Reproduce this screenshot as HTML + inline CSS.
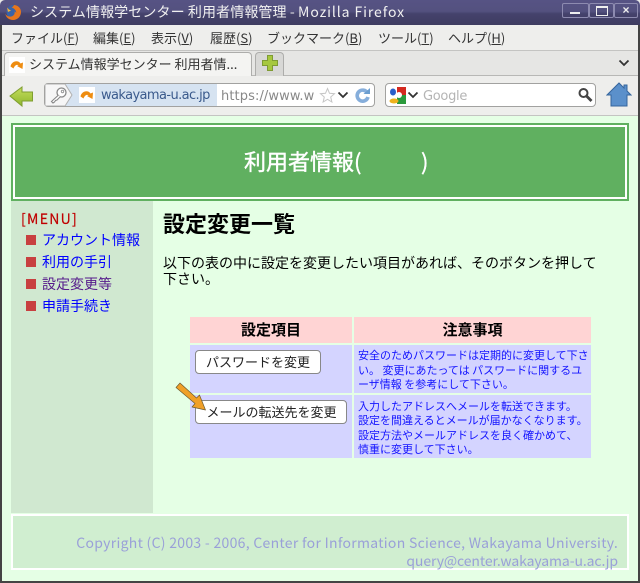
<!DOCTYPE html>
<html lang="ja"><head><meta charset="utf-8"><title>システム情報学センター 利用者情報管理</title>
<style>
html,body{margin:0;padding:0}
body{width:640px;height:583px;position:relative;overflow:hidden;background:#e9e9e7;font-family:"Liberation Sans","WenQuanYi Zen Hei","Noto Sans CJK JP",sans-serif;color:#222}
.a{position:absolute;white-space:nowrap}
.j{font-family:"WenQuanYi Zen Hei","Noto Sans CJK JP",sans-serif}
u{text-decoration:underline}
</style></head><body>
<div class="a" style="left:0;top:0;width:640px;height:25px;background:linear-gradient(#565384 0,#54517f 45%,#45426c 55%,#3e3c60 100%);border-radius:5px 5px 0 0"></div>
<svg class="a" style="left:4px;top:3px" width="18" height="18" viewBox="0 0 18 18"><circle cx="9.500" cy="9" r="7" fill="#3a63a8"/><path d="M10 2c4 .2 7 3 7 7 0 4.500-3.500 8-8 8-4 0-7-2.500-7.800-6.500 1.200 2.300 3.500 3.500 6 3 2.800-.6 4-3 3.300-5 .9.300 1.400.9 1.800 1.500-.2-2.800-2.300-5-4.800-5.500C8.800 3.800 9.600 3 10 2z" fill="#e8761c"/><path d="M3 4.500l1 4.500 3-1.500-2-1z" fill="#f4b23a"/></svg>
<div class="a j" style="left:30px;top:4px;font-size:14px;line-height:17px;color:#f0f0f0;letter-spacing:.1px">システム情報学センター 利用者情報管理 - <span style="letter-spacing:.9px">Mozilla Firefox</span></div>
<div class="a" style="left:562px;top:3px;width:25px;height:13px;border:1px solid #8d8bb0;border-radius:2px"><div class="a" style="left:7px;top:8px;width:10px;height:2px;background:#eee"></div></div>
<div class="a" style="left:589px;top:3px;width:23px;height:13px;border:1px solid #8d8bb0;border-radius:2px"><div class="a" style="left:6px;top:2px;width:10px;height:7px;border:1px solid #eee;border-top-width:2px"></div></div>
<div class="a" style="left:614px;top:3px;width:22px;height:13px;border:1px solid #8d8bb0;border-radius:2px;color:#eee;font:bold 12px/13px 'Liberation Sans',sans-serif;text-align:center">×</div>
<div class="a j" style="left:0;top:25px;width:640px;height:26px;background:#eeeeec;border-bottom:1px solid #c4c4c2;box-sizing:border-box"></div>
<div class="a j" style="left:11px;top:30px;font-size:13px;line-height:16px;color:#333">ファイル(<u>F</u>)</div>
<div class="a j" style="left:93px;top:30px;font-size:13px;line-height:16px;color:#333">編集(<u>E</u>)</div>
<div class="a j" style="left:151px;top:30px;font-size:13px;line-height:16px;color:#333">表示(<u>V</u>)</div>
<div class="a j" style="left:210px;top:30px;font-size:13px;line-height:16px;color:#333">履歴(<u>S</u>)</div>
<div class="a j" style="left:267px;top:30px;font-size:13px;line-height:16px;color:#333">ブックマーク(<u>B</u>)</div>
<div class="a j" style="left:378px;top:30px;font-size:13px;line-height:16px;color:#333">ツール(<u>T</u>)</div>
<div class="a j" style="left:448px;top:30px;font-size:13px;line-height:16px;color:#333">ヘルプ(<u>H</u>)</div>
<div class="a" style="left:0;top:51px;width:640px;height:25px;background:#e6e6e4;border-bottom:1px solid #b8b8b6;box-sizing:border-box"></div>
<div class="a" style="left:4px;top:52px;width:248px;height:24px;background:#f4f4f2;border:1px solid #adadab;border-bottom:0;border-radius:4px 4px 0 0;box-sizing:border-box"></div>
<svg class="a" style="left:9px;top:57px" width="16" height="16"><rect width="16" height="16" fill="#fff"/><path d="M1.500 9.500C2.500 4 9 2.500 11.500 6.500l2.500-1-.5 6.500-5.500-3 1.500-.8C8 7.500 6 8 4.500 11.500z" fill="#ee8c10"/></svg>
<div class="a j" style="left:29px;top:56px;font-size:13px;line-height:16px;color:#333">システム情報学センター 利用者情...</div>
<div class="a" style="left:255px;top:52px;width:29px;height:24px;background:#d8d8d6;border:1px solid #adadab;border-bottom:0;border-radius:4px 4px 0 0;box-sizing:border-box"></div>
<svg class="a" style="left:261px;top:54px" width="18" height="18"><path d="M6.500 1.500h5v5h5v5h-5v5h-5v-5h-5v-5h5z" fill="#a6c83e" stroke="#7f9c33"/></svg>
<svg class="a" style="left:618px;top:59px" width="12" height="8"><path d="M1.500 1.500L6 6l4.500-4.500" fill="none" stroke="#333" stroke-width="1.800"/></svg>
<div class="a" style="left:0;top:76px;width:640px;height:39px;background:#eeeeec"></div>
<svg class="a" style="left:9px;top:85px" width="25" height="23"><defs><linearGradient id="g" x1="0" y1="0" x2="0" y2="1"><stop offset="0" stop-color="#c4dc5c"/><stop offset="1" stop-color="#8fb82e"/></linearGradient></defs><path d="M1 11L13 2v5h10.500v9H13v5z" fill="url(#g)" stroke="#7f9e30"/></svg>
<div class="a" style="left:44px;top:83px;width:331px;height:24px;background:#fff;border:1px solid #a2a2a0;border-radius:4px;box-sizing:border-box"></div>
<div class="a" style="left:66px;top:84px;width:151px;height:22px;background:#d6e3f1"></div>
<svg class="a" style="left:45px;top:84px" width="29" height="22"><path d="M0 0h20l7 11-7 11H0z" fill="#f6f6f6" stroke="#b0b0b0"/></svg>
<svg class="a" style="left:49px;top:86px" width="19" height="18"><circle cx="12.500" cy="6.500" r="4.500" fill="#fff" stroke="#888" stroke-width="1.300"/><circle cx="13.500" cy="5.500" r="1.200" fill="none" stroke="#999"/><path d="M9 9.500L2.500 15.500l1.500 1.500 1.500-1 1-1.500 1.500-.5 3.500-3.500" fill="#fff" stroke="#888" stroke-width="1.100"/></svg>
<svg class="a" style="left:79px;top:87px" width="16" height="16"><rect width="16" height="16" fill="#fff"/><path d="M1.500 9.500C2.500 4 9 2.500 11.500 6.500l2.500-1-.5 6.500-5.500-3 1.500-.8C8 7.500 6 8 4.500 11.500z" fill="#ee8c10"/></svg>
<div class="a" style="left:101px;top:87px;font:13px/17px 'DejaVu Sans',sans-serif;color:#3a5a8c;letter-spacing:-.6px">wakayama-u.ac.jp</div>
<div class="a" style="left:221px;top:88px;width:93px;overflow:hidden;font:13px/17px 'DejaVu Sans',sans-serif;color:#888;letter-spacing:.1px">https://www.w</div>
<svg class="a" style="left:319px;top:87px" width="17" height="16"><path d="M8.500 1.500l2 4.800 5 .4-3.800 3.300 1.200 5-4.400-2.700-4.400 2.700 1.200-5L1.500 6.700l5-.4z" fill="#fff" stroke="#c6c6c6"/></svg>
<svg class="a" style="left:337px;top:91px" width="12" height="8"><path d="M1.500 1.500L6 6l4.500-4.500" fill="none" stroke="#333" stroke-width="1.800"/></svg>
<svg class="a" style="left:354px;top:87px" width="17" height="16"><path d="M13.500 6a5.500 5.500 0 1 0 .5 4" fill="none" stroke="#86aedb" stroke-width="3.600"/><path d="M9.500 7h6.500V1z" fill="#6d9fd0"/></svg>
<div class="a" style="left:385px;top:83px;width:211px;height:24px;background:#fff;border:1px solid #a2a2a0;border-radius:4px;box-sizing:border-box"></div>
<svg class="a" style="left:389px;top:87px" width="17" height="17"><rect x="8" width="9" height="8" fill="#d42a20"/><rect x="8" y="8" width="9" height="9" fill="#2b9a3c"/><ellipse cx="4" cy="5" rx="3" ry="3.500" fill="#2a5dc8"/><ellipse cx="5" cy="14" rx="4.500" ry="2.500" fill="#eeb21c"/><circle cx="10" cy="8" r="3" fill="#fff"/></svg>
<svg class="a" style="left:407px;top:91px" width="12" height="8"><path d="M1.500 1.500L6 6l4.500-4.500" fill="none" stroke="#333" stroke-width="1.800"/></svg>
<div class="a" style="left:423px;top:88px;font:13px/17px 'DejaVu Sans',sans-serif;color:#b4b4b4;letter-spacing:-.3px">Google</div>
<svg class="a" style="left:577px;top:87px" width="17" height="16"><circle cx="6.500" cy="6" r="4" fill="none" stroke="#444" stroke-width="2"/><path d="M9.500 9l5 5" stroke="#444" stroke-width="2.800"/></svg>
<svg class="a" style="left:606px;top:82px" width="26" height="25"><path d="M13 1L1 13h4v11h16V13h4l-4-4V3h-3v3z" fill="#5b90cb" stroke="#35659d"/></svg>
<div class="a" style="left:2px;top:115px;width:636px;height:466px;background:#e5ffe5;border-top:1px solid #c4c4c2;box-sizing:border-box"></div>
<div class="a" style="left:0;top:25px;width:2px;height:558px;background:#444"></div>
<div class="a" style="left:638px;top:25px;width:2px;height:558px;background:#444"></div>
<div class="a" style="left:0;top:581px;width:640px;height:2px;background:#444"></div>
<div class="a" style="left:11px;top:123px;width:618px;height:78px;background:#60b060"></div>
<div class="a" style="left:13px;top:125px;width:614px;height:74px;border:2px solid #fff;box-sizing:border-box"></div>
<div class="a j" style="left:244px;top:148px;font-size:22px;line-height:26px;color:#fff;-webkit-text-stroke:.4px #fff;white-space:pre">利用者情報(</div>
<div class="a j" style="left:421px;top:148px;font-size:22px;line-height:26px;color:#fff;-webkit-text-stroke:.4px #fff">)</div>
<div class="a" style="left:11px;top:201px;width:142px;height:312px;background:#d0e8d0"></div>
<div class="a j" style="left:21px;top:211px;font-size:14px;line-height:17px;color:#c00000;letter-spacing:1.300px;-webkit-text-stroke:.2px #c00000">[MENU]</div>
<div class="a" style="left:26px;top:235px;width:10px;height:10px;background:#c84040"></div>
<div class="a j" style="left:42px;top:232px;font-size:14px;line-height:17px;color:#0000ff">アカウント情報</div>
<div class="a" style="left:26px;top:257px;width:10px;height:10px;background:#c84040"></div>
<div class="a j" style="left:42px;top:254px;font-size:14px;line-height:17px;color:#0000ff">利用の手引</div>
<div class="a" style="left:26px;top:279px;width:10px;height:10px;background:#c84040"></div>
<div class="a j" style="left:42px;top:276px;font-size:14px;line-height:17px;color:#551a8b">設定変更等</div>
<div class="a" style="left:26px;top:301px;width:10px;height:10px;background:#c84040"></div>
<div class="a j" style="left:42px;top:298px;font-size:14px;line-height:17px;color:#0000ff">申請手続き</div>
<div class="a j" style="left:163px;top:210px;font-size:22px;line-height:26px;font-weight:bold;color:#000">設定変更一覧</div>
<div class="a j" style="left:163px;top:255px;font-size:14px;line-height:16px;color:#000">以下の表の中に設定を変更したい項目があれば、そのボタンを押して<br>下さい。</div>
<div class="a" style="left:190px;top:317px;width:162px;height:26px;background:#ffd4d4"></div>
<div class="a" style="left:354px;top:317px;width:237px;height:26px;background:#ffd4d4"></div>
<div class="a j" style="left:190px;top:321px;width:162px;text-align:center;font-size:15px;line-height:18px;font-weight:bold;color:#000">設定項目</div>
<div class="a j" style="left:354px;top:321px;width:237px;text-align:center;font-size:15px;line-height:18px;font-weight:bold;color:#000">注意事項</div>
<div class="a" style="left:190px;top:345px;width:162px;height:48px;background:#d4d4ff"></div>
<div class="a" style="left:354px;top:345px;width:237px;height:48px;background:#d4d4ff"></div>
<div class="a" style="left:190px;top:395px;width:162px;height:63px;background:#d4d4ff"></div>
<div class="a" style="left:354px;top:395px;width:237px;height:63px;background:#d4d4ff"></div>
<div class="a j" style="left:195px;top:350px;width:126px;height:24px;background:#fff;border:1px solid #888;border-radius:4px;box-sizing:border-box;text-align:center;font-size:13px;line-height:22px;color:#222">パスワードを変更</div>
<div class="a j" style="left:195px;top:400px;width:152px;height:24px;background:#fff;border:1px solid #888;border-radius:4px;box-sizing:border-box;text-align:center;font-size:13px;line-height:22px;color:#222;padding-left:1px">メールの転送先を変更</div>
<svg class="a" style="left:170px;top:378px" width="40" height="36"><path d="M6 9.500L10 5 26.500 20 29.500 17 35.500 32 22 29 25 25.500z" fill="#f0a028" stroke="#6b5a30" stroke-width=".7" stroke-linejoin="round"/></svg>
<div class="a j" style="left:358px;top:348px;font-size:11px;line-height:14.500px;color:#1414ff">安全のためパスワードは定期的に変更して下さ<br>い。 変更にあたっては パスワードに関するユ<br>ーザ情報 を参考にして下さい。</div>
<div class="a j" style="left:358px;top:399px;font-size:11px;line-height:14.300px;color:#1414ff">入力したアドレスへメールを転送できます。<br>設定を間違えるとメールが届かなくなります。<br>設定方法やメールアドレスを良く確かめて、<br>慎重に変更して下さい。</div>
<div class="a" style="left:11px;top:514px;width:618px;height:56px;background:#d0eed0;border:2px solid #fff;box-sizing:border-box"></div>
<div class="a j" style="right:22px;top:534px;font-size:14px;line-height:18px;color:#9aa0d8;text-align:right"><span style="letter-spacing:.29px">Copyright (C) 2003 - 2006, Center for Information Science, Wakayama University.</span><br><span style="letter-spacing:-.1px">query@center.wakayama-u.ac.jp</span></div>
</body></html>
